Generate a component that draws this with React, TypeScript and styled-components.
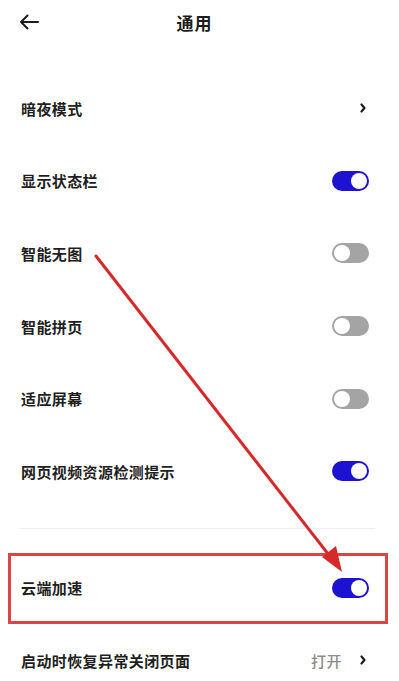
import React from 'react';
import styled, { createGlobalStyle } from 'styled-components';

const GlobalStyle = createGlobalStyle`
  html, body {
    margin: 0;
    padding: 0;
    background: #ffffff;
  }
  body {
    font-family: "Noto Sans CJK SC", "Noto Sans", "Liberation Sans", sans-serif;
    -webkit-font-smoothing: antialiased;
  }
`;

type Item = {
  label: string;
  kind: 'arrow' | 'toggle';
  on?: boolean;
  value?: string;
};

const mainItems: Item[] = [
  { label: '暗夜模式', kind: 'arrow' },
  { label: '显示状态栏', kind: 'toggle', on: true },
  { label: '智能无图', kind: 'toggle', on: false },
  { label: '智能拼页', kind: 'toggle', on: false },
  { label: '适应屏幕', kind: 'toggle', on: false },
  { label: '网页视频资源检测提示', kind: 'toggle', on: true },
];

const extraItems: Item[] = [
  { label: '云端加速', kind: 'toggle', on: true },
  { label: '启动时恢复异常关闭页面', kind: 'arrow', value: '打开' },
];

const Page = styled.div`
  position: relative;
  width: 399px;
  height: 681px;
  overflow: hidden;
  background: #ffffff;
  color: #1f1f1f;
`;

const Header = styled.div`
  height: 44px;
  display: grid;
  grid-template-columns: 1fr auto 1fr;
  align-items: center;
  padding: 0 28px 0 18px;
`;

const Back = styled.div`
  display: flex;
  align-items: center;
`;

const Title = styled.div`
  font-size: 17px;
  font-weight: 700;
  color: #1c1c1c;
  letter-spacing: 1px;
`;

const Group = styled.div<{ $top: number; $bottom: number }>`
  display: flex;
  flex-direction: column;
  padding-top: ${(p) => p.$top}px;
  padding-bottom: ${(p) => p.$bottom}px;
`;

const Row = styled.div`
  height: 72.6px;
  display: flex;
  align-items: center;
  justify-content: space-between;
  padding: 0 30px 0 21px;
`;

const Label = styled.div`
  font-size: 15px;
  font-weight: 700;
  letter-spacing: 0.4px;
  color: #1f1f1f;
`;

const Switch = styled.div<{ $on: boolean }>`
  width: 37px;
  height: 20px;
  border-radius: 10px;
  background: ${(p) => (p.$on ? '#1d12d2' : '#a4a4a4')};
  display: flex;
  align-items: center;
  justify-content: ${(p) => (p.$on ? 'flex-end' : 'flex-start')};
  padding: 0 2px;
  box-sizing: border-box;
`;

const Knob = styled.div`
  width: 16px;
  height: 16px;
  border-radius: 50%;
  background: #ffffff;
`;

const Trail = styled.div`
  display: flex;
  align-items: center;
  gap: 17px;
  margin-right: 2px;
`;

const Value = styled.span`
  font-size: 15px;
  font-weight: 500;
  color: #8c8c8c;
  letter-spacing: 0.5px;
`;

const Divider = styled.div`
  height: 1px;
  margin: 0 24px 0 20px;
  background: #efefef;
`;

const Highlight = styled.div`
  position: absolute;
  left: 8px;
  top: 553px;
  width: 380px;
  height: 71px;
  box-sizing: border-box;
  border: 3px solid #d94646;
  pointer-events: none;
`;

const Annotation = styled.svg`
  position: absolute;
  left: 0;
  top: 0;
  pointer-events: none;
`;

function Chevron() {
  return (
    <svg width="8" height="12" viewBox="0 0 8 12">
      <polyline points="2.5,2.5 5.5,6 2.5,9.5" fill="none" stroke="#1c1c1c" strokeWidth="2.2" strokeLinecap="round" strokeLinejoin="round" />
    </svg>
  );
}

function BackArrow() {
  return (
    <svg width="22" height="18" viewBox="0 0 22 18">
      <path d="M20 9H3M9.5 2.5L3 9l6.5 6.5" fill="none" stroke="#1c1c1c" strokeWidth="2" strokeLinecap="round" strokeLinejoin="round" />
    </svg>
  );
}

function SettingRow({ item }: { item: Item }) {
  return (
    <Row>
      <Label>{item.label}</Label>
      {item.kind === 'toggle' ? (
        <Switch $on={!!item.on}>
          <Knob />
        </Switch>
      ) : (
        <Trail>
          {item.value && <Value>{item.value}</Value>}
          <Chevron />
        </Trail>
      )}
    </Row>
  );
}

export default function App() {
  return (
    <>
      <GlobalStyle />
      <Page>
        <Header>
          <Back>
            <BackArrow />
          </Back>
          <Title>通用</Title>
          <span />
        </Header>

        <Group $top={28} $bottom={20}>
          {mainItems.map((item) => (
            <SettingRow key={item.label} item={item} />
          ))}
        </Group>

        <Divider />

        <Group $top={23} $bottom={0}>
          {extraItems.map((item) => (
            <SettingRow key={item.label} item={item} />
          ))}
        </Group>

        {/* annotation drawn over the screenshot */}
        <Highlight />
        <Annotation viewBox="0 0 399 681" width="399" height="681">
          <defs>
            <filter id="soft" x="-10%" y="-10%" width="120%" height="120%">
              <feGaussianBlur stdDeviation="0.6" />
            </filter>
          </defs>
          <g filter="url(#soft)">
            <line x1="96" y1="256" x2="332" y2="559" stroke="#d62b2b" strokeWidth="3" strokeLinecap="round" />
            <polygon points="342,572 322,557 336,546" fill="#d62b2b" />
          </g>
        </Annotation>
      </Page>
    </>
  );
}
